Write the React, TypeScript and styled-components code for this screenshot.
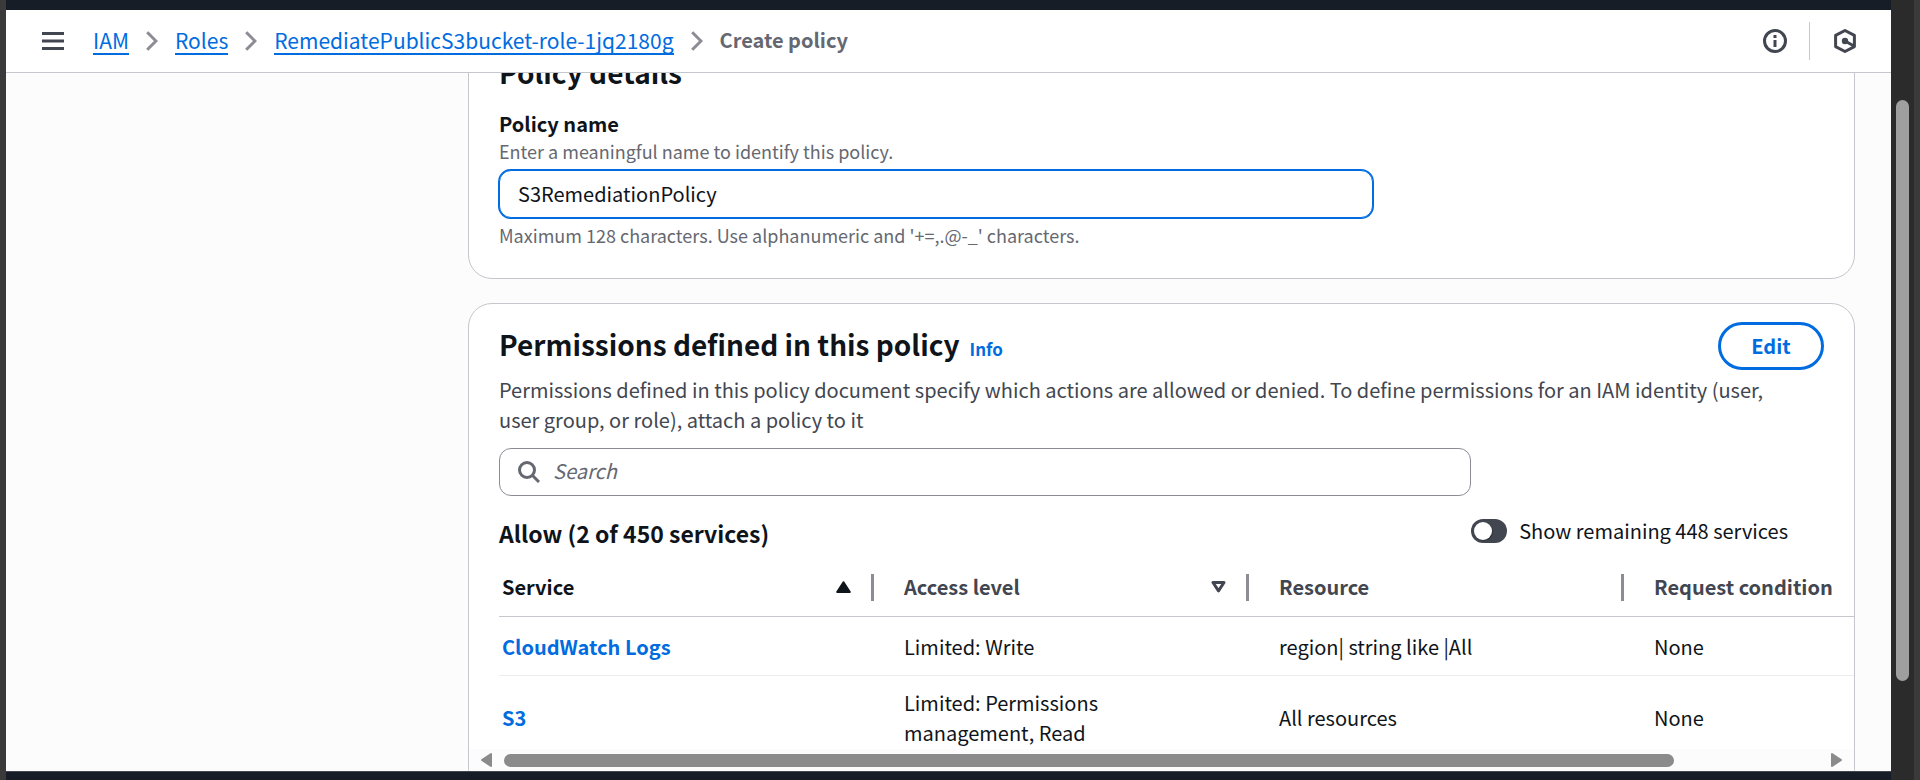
import React, { useState } from 'react';
import styled, { createGlobalStyle } from 'styled-components';

const color = {
  text: '#0f141a',
  secondary: '#424650',
  muted: '#656871',
  link: '#006ce0',
  control: '#8c8c94',
  border: '#c6c6cd',
  navy: '#161d26',
};

const GlobalStyle = createGlobalStyle`
  *, *::before, *::after { box-sizing: border-box; }
  body { margin: 0; }
  body, input, button {
    font-family: "Noto Sans CJK SC", "Noto Sans", sans-serif;
    font-size: 20px;
    line-height: 30px;
    color: ${color.text};
  }
  h2, h3, p, ol { margin: 0; padding: 0; }
  svg { display: block; flex: none; }
`;

const Window = styled.div`
  display: grid;
  grid-template-columns: 6px minmax(0, 1fr) 23px 6px;
  height: 100vh;
  min-height: 600px;
  overflow: hidden;
  background: #3a3a3a;
`;

const Page = styled.div`
  grid-column: 2;
  display: flex;
  flex-direction: column;
  min-height: 0;
  background: #fcfcfd;
`;

const TopBar = styled.div`
  flex: none;
  height: 10px;
  background: ${color.navy};
`;

const BottomBar = styled.footer`
  flex: none;
  height: 9px;
  border-top: 1px solid ${color.secondary};
  background: ${color.navy};
`;

const Header = styled.header`
  flex: none;
  display: flex;
  align-items: center;
  height: 63px;
  padding: 0 35px 0 36px;
  border-bottom: 1px solid ${color.border};
  background: #fff;
`;

const IconButton = styled.button`
  display: flex;
  padding: 0;
  border: 0;
  background: none;
  color: ${color.secondary};
  cursor: pointer;
`;

const Breadcrumbs = styled.nav`
  flex: 1;
  margin-left: 29px;
`;

const CrumbList = styled.ol`
  display: flex;
  align-items: center;
  gap: 17px;
  list-style: none;
`;

const Crumb = styled.li`
  display: flex;
  align-items: center;
  gap: 17px;
`;

const CrumbLink = styled.a`
  border-bottom: 2px solid ${color.link};
  font-size: 21px;
  line-height: 26px;
  color: ${color.link};
  text-decoration: none;
`;

const CrumbCurrent = styled.span`
  padding-bottom: 2px;
  font-weight: 700;
  line-height: 26px;
  color: ${color.muted};
`;

const HeaderTools = styled.div`
  display: flex;
  align-items: center;
  gap: 22px;
`;

const ToolDivider = styled.span`
  width: 1px;
  height: 38px;
  margin-right: 2px;
  background: ${color.border};
`;

const Main = styled.main`
  position: relative;
  flex: 1;
  min-height: 0;
  overflow: hidden;
`;

/* The page is shown part way down its scroll range. */
const Scrolled = styled.div`
  display: flex;
  flex-direction: column;
  gap: 24px;
  margin: -40px 36px 0 462px;
`;

const Card = styled.section`
  padding: 18px 30px 31px;
  overflow: hidden;
  border: 1px solid ${color.border};
  border-radius: 24px;
  background: #fff;
`;

const CardTitle = styled.h2`
  font-size: 28px;
  font-weight: 700;
  line-height: 40px;
`;

const Field = styled.div`
  display: flex;
  flex-direction: column;
  margin-top: 17px;
`;

const FieldLabel = styled.label`
  font-weight: 700;
`;

const Hint = styled.p`
  font-size: 18px;
  line-height: 24px;
  color: ${color.muted};
`;

const NameInput = styled.input`
  width: 100%;
  max-width: 874px;
  height: 48px;
  margin: 7px 0 5px;
  padding: 0 18px 2px;
  border: 1px solid ${color.link};
  border-radius: 12px;
  outline: none;
  box-shadow: 0 0 0 1px ${color.link};
  background: #fff;
`;

const CardHeader = styled.div`
  display: flex;
  align-items: center;
  justify-content: space-between;
`;

const TitleGroup = styled.div`
  display: flex;
  align-items: baseline;
  gap: 10px;
  padding-bottom: 4px;
`;

const InfoLink = styled.a`
  font-size: 17px;
  font-weight: 700;
  line-height: 24px;
  color: ${color.link};
  text-decoration: none;
`;

const EditButton = styled.button`
  width: 106px;
  height: 48px;
  padding: 0;
  border: 3px solid ${color.link};
  border-radius: 24px;
  background: #fff;
  font-weight: 700;
  color: ${color.link};
  cursor: pointer;
`;

const Description = styled.p`
  margin-top: 5px;
  padding-right: 30px;
  color: ${color.secondary};
`;

const SearchBox = styled.label`
  display: flex;
  align-items: center;
  gap: 13px;
  width: 100%;
  max-width: 972px;
  height: 48px;
  margin-top: 13px;
  padding: 0 18px;
  border: 1px solid ${color.control};
  border-radius: 12px;
  color: ${color.muted};
`;

const SearchInput = styled.input`
  flex: 1;
  min-width: 0;
  padding: 0 0 2px;
  border: 0;
  outline: none;
  background: none;
  &::placeholder {
    color: ${color.muted};
    font-style: italic;
    opacity: 1;
  }
`;

const AllowRow = styled.div`
  display: flex;
  align-items: flex-start;
  justify-content: space-between;
  margin-top: 20px;
  padding-right: 36px;
`;

const AllowTitle = styled.h3`
  font-size: 23px;
  font-weight: 700;
  line-height: 34px;
`;

const ToggleLabel = styled.label`
  display: flex;
  align-items: center;
  gap: 12px;
  cursor: pointer;
`;

const Toggle = styled.input`
  appearance: none;
  display: flex;
  align-items: center;
  width: 36px;
  height: 24px;
  margin: 0;
  padding: 3px;
  border-radius: 12px;
  background: ${color.secondary};
  cursor: pointer;
  &::before {
    content: "";
    width: 18px;
    height: 18px;
    border-radius: 50%;
    background: #fff;
    box-shadow: 1px 1px 1px rgba(0, 0, 0, 0.25);
  }
  &:checked { background: ${color.link}; }
  &:checked::before { margin-left: 12px; }
`;

const TableScroller = styled.div`
  margin-right: -30px;
  overflow: hidden;
`;

const Table = styled.table`
  width: 1540px;
  table-layout: fixed;
  border-collapse: separate;
  border-spacing: 0;
`;

const HeadCell = styled.th<{ $active?: boolean }>`
  width: 375px;
  padding: 22px 0 14px 30px;
  border-bottom: 1px solid ${color.border};
  text-align: left;
  font-weight: 700;
  color: ${p => (p.$active ? color.text : color.secondary)};
  &:first-child { padding-left: 3px; }
  &:last-child { width: auto; }
`;

const HeadContent = styled.div<{ $divided?: boolean }>`
  display: flex;
  align-items: center;
  height: 30px;
  &::after {
    content: "";
    display: ${p => (p.$divided ? 'block' : 'none')};
    width: 3px;
    height: 27px;
    margin-left: auto;
    background: ${color.control};
  }
`;

const SortButton = styled.button`
  flex: 1;
  display: flex;
  align-items: center;
  justify-content: space-between;
  margin-right: 20px;
  padding: 0;
  border: 0;
  background: none;
  font-weight: 700;
  color: inherit;
  cursor: pointer;
`;

const Cell = styled.td`
  height: 59px;
  padding: 12px 140px 11px 30px;
  border-bottom: 1px solid #ebebf0;
  vertical-align: middle;
  &:first-child { padding-left: 3px; }
`;

const ServiceLink = styled.a`
  font-weight: 700;
  color: ${color.link};
  text-decoration: none;
`;

const TableScrollbar = styled.div`
  position: absolute;
  right: 37px;
  bottom: 0;
  left: 463px;
  display: flex;
  align-items: center;
  gap: 12px;
  height: 22px;
  padding: 0 12px;
  background: #fcfcfc;
  color: #8b8b8b;
`;

const Track = styled.div`
  flex: 1;
`;

const TrackThumb = styled.div`
  width: 89%;
  height: 13px;
  border-radius: 7px;
  background: #8b8b8b;
`;

const PageScrollbar = styled.div`
  padding: 100px 5px 0;
  background: #2b2b2b;
`;

const PageThumb = styled.div`
  height: 85.4%;
  border-radius: 7px;
  background: #9f9f9f;
`;

const MenuIcon = () => (
  <svg width="22" height="18" viewBox="0 0 22 18" fill="currentColor" aria-hidden="true">
    <path d="M0 0h22v3H0zM0 7.5h22v3H0zM0 15h22v3H0z" />
  </svg>
);

const ChevronIcon = () => (
  <svg width="12" height="20" viewBox="0 0 12 20" fill="none" stroke={color.control} strokeWidth="3" aria-hidden="true">
    <path d="M1.2 1.2 10 10l-8.8 8.8" />
  </svg>
);

const InfoIcon = () => (
  <svg width="24" height="24" viewBox="0 0 24 24" fill="none" stroke="currentColor" strokeWidth="3" aria-hidden="true">
    <circle cx="12" cy="12" r="10.5" />
    <path d="M12 11v7M12 6v3" />
  </svg>
);

const HexIcon = () => (
  <svg width="22" height="24" viewBox="0 0 22 24" fill="none" stroke="currentColor" strokeWidth="3" strokeLinejoin="round" aria-hidden="true">
    <path d="M11 1.5 20.4 6.4v11.2L11 22.5 1.6 17.6V6.4z" />
    <path d="M11 12l9 5" />
    <circle cx="11" cy="12" r="3.2" fill="currentColor" stroke="none" />
  </svg>
);

const SearchIcon = () => (
  <svg width="22" height="22" viewBox="0 0 22 22" fill="none" stroke="currentColor" strokeWidth="3" aria-hidden="true">
    <circle cx="9" cy="9" r="7.5" />
    <path d="M14.3 14.3 21 21" />
  </svg>
);

const SortAscIcon = () => (
  <svg width="15" height="12" viewBox="0 0 15 12" fill="currentColor" stroke="currentColor" strokeWidth="2" strokeLinejoin="round" aria-hidden="true">
    <path d="M7.5 1.2 13.8 11H1.2z" />
  </svg>
);

const SortIcon = () => (
  <svg width="15" height="12" viewBox="0 0 15 12" fill="none" stroke="currentColor" strokeWidth="3" strokeLinejoin="round" aria-hidden="true">
    <path d="M2 1.5h11L7.5 9.8z" />
  </svg>
);

const ArrowIcon = ({ flip }: { flip?: boolean }) => (
  <svg width="11" height="14" viewBox="0 0 11 14" fill="currentColor" stroke="currentColor" strokeWidth="2" strokeLinejoin="round" aria-hidden="true">
    <path d={flip ? 'M1 1l9 6-9 6z' : 'M10 1 1 7l9 6z'} />
  </svg>
);

const crumbs = ['IAM', 'Roles', 'RemediatePublicS3bucket-role-1jq2180g'];

const rows = [
  { service: 'CloudWatch Logs', access: 'Limited: Write', resource: 'region| string like |All', condition: 'None' },
  { service: 'S3', access: 'Limited: Permissions management, Read', resource: 'All resources', condition: 'None' },
];

export default function App() {
  const [name, setName] = useState('S3RemediationPolicy');
  const [query, setQuery] = useState('');
  const [showAll, setShowAll] = useState(false);

  return (
    <Window>
      <GlobalStyle />
      <Page>
        <TopBar />
        <Header>
          <IconButton type="button" aria-label="Open navigation"><MenuIcon /></IconButton>
          <Breadcrumbs aria-label="Breadcrumbs">
            <CrumbList>
              {crumbs.map(crumb => (
                <Crumb key={crumb}>
                  <CrumbLink href="#">{crumb}</CrumbLink>
                  <ChevronIcon />
                </Crumb>
              ))}
              <Crumb><CrumbCurrent aria-current="page">Create policy</CrumbCurrent></Crumb>
            </CrumbList>
          </Breadcrumbs>
          <HeaderTools>
            <IconButton type="button" aria-label="Open help panel"><InfoIcon /></IconButton>
            <ToolDivider />
            <IconButton type="button" aria-label="Open assistant"><HexIcon /></IconButton>
          </HeaderTools>
        </Header>

        <Main>
          <Scrolled>
            <Card>
              <CardTitle>Policy details</CardTitle>
              <Field>
                <FieldLabel htmlFor="policy-name">Policy name</FieldLabel>
                <Hint>Enter a meaningful name to identify this policy.</Hint>
                <NameInput id="policy-name" type="text" value={name} onChange={e => setName(e.target.value)} />
                <Hint>Maximum 128 characters. Use alphanumeric and '+=,.@-_' characters.</Hint>
              </Field>
            </Card>

            <Card>
              <CardHeader>
                <TitleGroup>
                  <CardTitle>Permissions defined in this policy</CardTitle>
                  <InfoLink href="#">Info</InfoLink>
                </TitleGroup>
                <EditButton type="button">Edit</EditButton>
              </CardHeader>
              <Description>
                Permissions defined in this policy document specify which actions are allowed or denied. To define
                permissions for an IAM identity (user, user group, or role), attach a policy to it
              </Description>
              <SearchBox>
                <SearchIcon />
                <SearchInput
                  type="text"
                  aria-label="Search"
                  placeholder="Search"
                  value={query}
                  onChange={e => setQuery(e.target.value)}
                />
              </SearchBox>
              <AllowRow>
                <AllowTitle>Allow (2 of 450 services)</AllowTitle>
                <ToggleLabel>
                  <Toggle type="checkbox" role="switch" checked={showAll} onChange={e => setShowAll(e.target.checked)} />
                  Show remaining 448 services
                </ToggleLabel>
              </AllowRow>
              <TableScroller>
                <Table>
                  <thead>
                    <tr>
                      <HeadCell $active scope="col" aria-sort="ascending">
                        <HeadContent $divided><SortButton type="button">Service<SortAscIcon /></SortButton></HeadContent>
                      </HeadCell>
                      <HeadCell scope="col">
                        <HeadContent $divided><SortButton type="button">Access level<SortIcon /></SortButton></HeadContent>
                      </HeadCell>
                      <HeadCell scope="col"><HeadContent $divided>Resource</HeadContent></HeadCell>
                      <HeadCell scope="col"><HeadContent>Request condition</HeadContent></HeadCell>
                    </tr>
                  </thead>
                  <tbody>
                    {rows.map(row => (
                      <tr key={row.service}>
                        <Cell><ServiceLink href="#">{row.service}</ServiceLink></Cell>
                        <Cell>{row.access}</Cell>
                        <Cell>{row.resource}</Cell>
                        <Cell>{row.condition}</Cell>
                      </tr>
                    ))}
                  </tbody>
                </Table>
              </TableScroller>
            </Card>
          </Scrolled>
          <TableScrollbar aria-hidden="true">
            <ArrowIcon />
            <Track><TrackThumb /></Track>
            <ArrowIcon flip />
          </TableScrollbar>
        </Main>
        <BottomBar />
      </Page>
      <PageScrollbar aria-hidden="true"><PageThumb /></PageScrollbar>
    </Window>
  );
}
